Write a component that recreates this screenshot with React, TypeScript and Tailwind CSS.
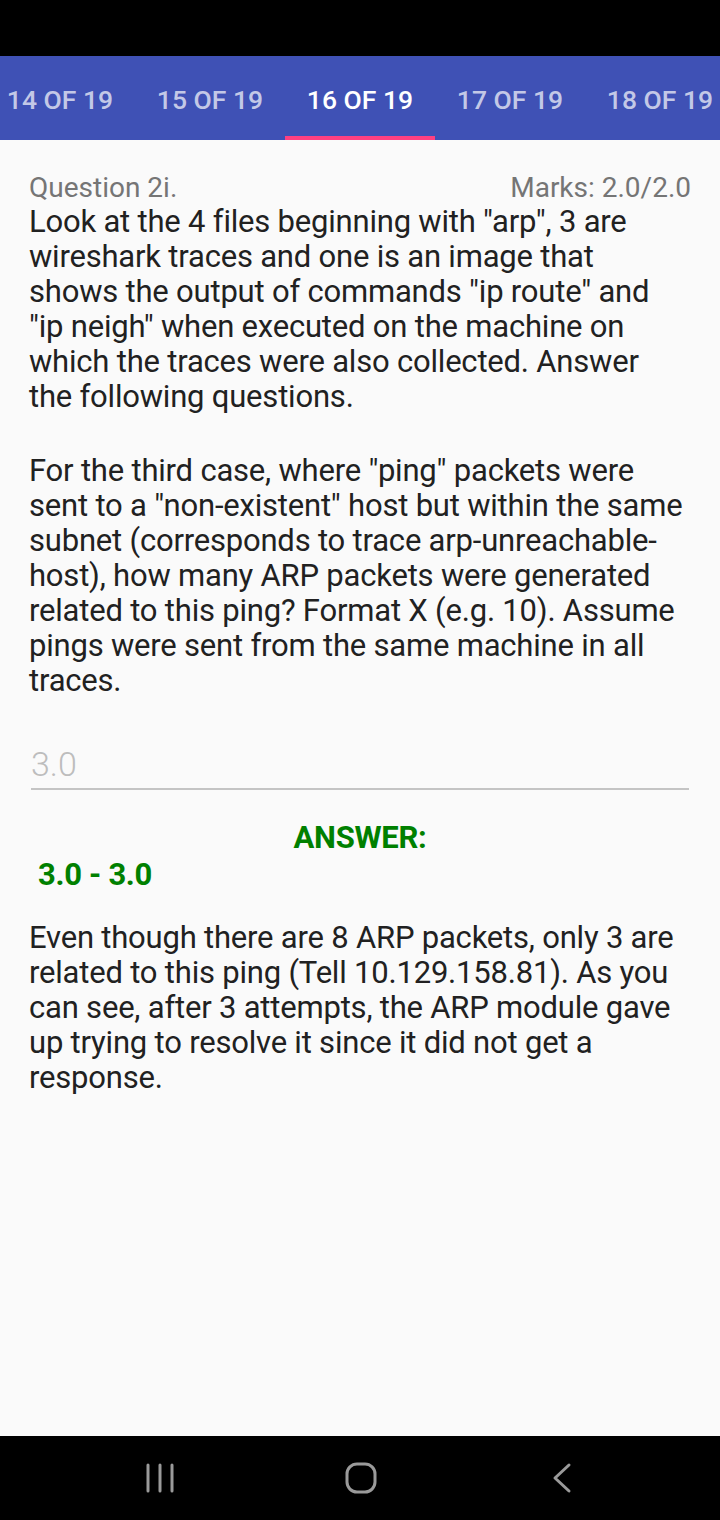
import React from 'react';

const tabs = ['14 OF 19', '15 OF 19', '16 OF 19', '17 OF 19', '18 OF 19'];

const questionLines = [
    'Look at the 4 files beginning with "arp", 3 are',
    'wireshark traces and one is an image that',
    'shows the output of commands "ip route" and',
    '"ip neigh" when executed on the machine on',
    'which the traces were also collected. Answer',
    'the following questions.',
];

const caseLines = [
    'For the third case, where "ping" packets were',
    'sent to a "non-existent" host but within the same',
    'subnet (corresponds to trace arp-unreachable-',
    'host), how many ARP packets were generated',
    'related to this ping? Format X (e.g. 10). Assume',
    'pings were sent from the same machine in all',
    'traces.',
];

const explainLines = [
    'Even though there are 8 ARP packets, only 3 are',
    'related to this ping (Tell 10.129.158.81). As you',
    'can see, after 3 attempts, the ARP module gave',
    'up trying to resolve it since it did not get a',
    'response.',
];

const Lines: React.FC<{ lines: string[] }> = ({ lines }) => (
    <div className="text-[31px] leading-[35px] text-[#212121] whitespace-nowrap tracking-[-0.2px]">
        {lines.map((l, i) => (
            <div key={i}>{l}</div>
        ))}
    </div>
);

export default function App() {
    return (
        <div className="w-[720px] h-[1520px] flex flex-col bg-[#fafafa] overflow-hidden" style={{ fontFamily: 'Roboto, "Noto Sans", sans-serif' }}>
            {/* status bar */}
            <div className="h-[56px] bg-black shrink-0" />

            {/* tabs */}
            <div className="h-[84px] bg-[#3f51b5] shrink-0 flex overflow-hidden">
                <div className="flex -ml-[15px]">
                    {tabs.map((t) => {
                        const active = t === '16 OF 19';
                        return (
                            <div key={t} className="w-[150px] shrink-0 flex flex-col">
                                <div className={`flex-1 flex items-center justify-center pt-[7px] text-[26.5px] font-medium ${active ? 'text-white' : 'text-white/70'}`}>
                                    {t}
                                </div>
                                <div className={`h-[4px] ${active ? 'bg-[#ff4081]' : ''}`} />
                            </div>
                        );
                    })}
                </div>
            </div>

            {/* content */}
            <div className="flex-1 px-[29px] pt-[31px]">
                <div className="flex justify-between items-center text-[28px] leading-[33px] text-[#757575]">
                    <span>Question 2i.</span>
                    <span>Marks: 2.0/2.0</span>
                </div>
                <Lines lines={questionLines} />
                <div className="h-[39px]" />
                <Lines lines={caseLines} />

                <div className="mt-[47px] mx-[2px] border-b-2 border-[#c4c4c4] pb-[5px]">
                    <div className="text-[34px] leading-[38px] text-[#bdbdbd] font-light">3.0</div>
                </div>

                <div className="mt-[30px] text-center text-[31px] leading-[36px] font-bold text-[#008000] tracking-[-0.3px]">ANSWER:</div>
                <div className="pl-[9px] text-[31px] leading-[38px] font-bold text-[#008000] tracking-[-0.3px]">3.0 - 3.0</div>

                <div className="mt-[26px]">
                    <Lines lines={explainLines} />
                </div>
            </div>

            {/* nav bar */}
            <div className="h-[84px] bg-black shrink-0 flex items-center pl-[140px] gap-[161px]">
                <svg width="40" height="40" viewBox="0 0 40 40">
                    <g stroke="#9a9a9a" strokeWidth="3" strokeLinecap="round">
                        <line x1="8" y1="7" x2="8" y2="33" />
                        <line x1="20" y1="7" x2="20" y2="33" />
                        <line x1="32" y1="7" x2="32" y2="33" />
                    </g>
                </svg>
                <svg width="40" height="40" viewBox="0 0 40 40">
                    <rect x="6" y="6" width="28" height="28" rx="10" fill="none" stroke="#9a9a9a" strokeWidth="3" />
                </svg>
                <svg width="40" height="40" viewBox="0 0 40 40">
                    <polyline points="27,7 13,20 27,33" fill="none" stroke="#9a9a9a" strokeWidth="3" strokeLinecap="round" strokeLinejoin="round" />
                </svg>
            </div>
        </div>
    );
}
